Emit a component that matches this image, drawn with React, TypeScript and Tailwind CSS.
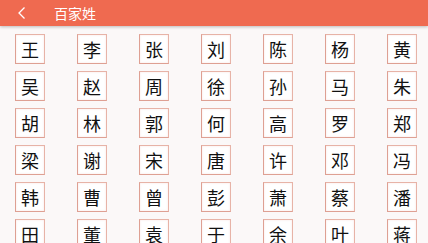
const rows = [
  ["王", "李", "张", "刘", "陈", "杨", "黄"],
  ["吴", "赵", "周", "徐", "孙", "马", "朱"],
  ["胡", "林", "郭", "何", "高", "罗", "郑"],
  ["梁", "谢", "宋", "唐", "许", "邓", "冯"],
  ["韩", "曹", "曾", "彭", "萧", "蔡", "潘"],
  ["田", "董", "袁", "于", "余", "叶", "蒋"],
];

export default function App() {
  return (
    <div
      className="w-[428px] h-[243px] overflow-hidden bg-[#fbf8f8]"
      style={{ fontFamily: '"Noto Sans CJK SC", "Noto Sans", sans-serif' }}
    >
      <div className="relative z-10 h-[26px] bg-[#ef6a50] flex items-center shadow-[0_1px_3px_rgba(0,0,0,0.25)]">
        <svg width="10" height="14" viewBox="0 0 10 14" className="ml-[17px]">
          <path d="M7.5 1.5 L2 7 L7.5 12.5" fill="none" stroke="#fff" strokeWidth="1.3" />
        </svg>
        <span className="ml-[27px] text-white text-[14px] leading-none">百家姓</span>
      </div>
      <div className="pl-[15px] pt-[8px] grid grid-cols-[repeat(7,30px)] gap-x-[32px] gap-y-[7px]">
        {rows.flat().map((c, i) => (
          <div
            key={i}
            className="w-[30px] h-[30px] bg-white border border-[#e7b3a7] border-l-[#dea093] border-b-[#dea093] shadow-[inset_0_0_2px_rgba(230,160,145,0.3)] flex items-center justify-center text-[18px] leading-none text-[#111]"
          >
            {c}
          </div>
        ))}
      </div>
    </div>
  );
}
